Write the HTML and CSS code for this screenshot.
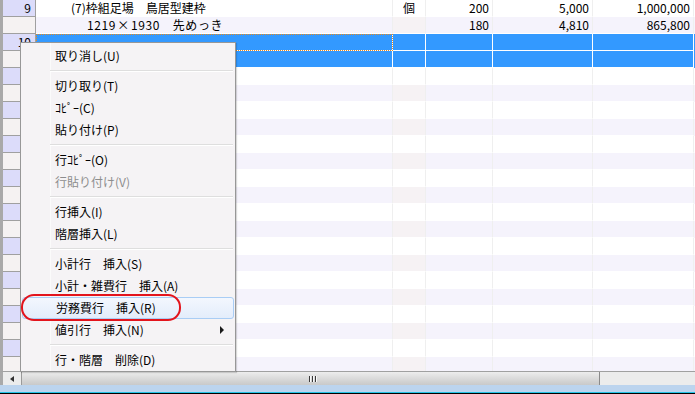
FILE: index.html
```html
<!DOCTYPE html>
<html lang="ja">

<head>
    <meta charset="UTF-8">
    <title>明細入力</title>
    <link rel="stylesheet" href="styles.css">
</head>

<body>
    <div class="window">
        <div class="grid">
            <div class="row">
                <div class="hdr">9</div>
                <div class="cell name">(7)枠組足場　鳥居型建枠</div>
                <div class="cell unit">個</div>
                <div class="cell num n1">200</div>
                <div class="cell num n2">5,000</div>
                <div class="cell num n3">1,000,000</div>
            </div>
            <div class="row alt">
                <div class="hdr">&nbsp;</div>
                <div class="cell name sub">1219<span class="times">×</span>1930　先めっき</div>
                <div class="cell unit"></div>
                <div class="cell num n1">180</div>
                <div class="cell num n2">4,810</div>
                <div class="cell num n3">865,800</div>
            </div>
            <div class="row sel">
                <div class="hdr">10</div>
                <div class="cell name focus"></div>
                <div class="cell unit"></div>
                <div class="cell num n1"></div>
                <div class="cell num n2"></div>
                <div class="cell num n3"></div>
            </div>
            <div class="row alt sel">
                <div class="hdr"></div>
                <div class="cell name"></div>
                <div class="cell unit"></div>
                <div class="cell num n1"></div>
                <div class="cell num n2"></div>
                <div class="cell num n3"></div>
            </div>
            <!-- empty rows -->
            <div class="row"><div class="hdr"></div><div class="cell name"></div><div class="cell unit"></div><div class="cell num n1"></div><div class="cell num n2"></div><div class="cell num n3"></div></div>
            <div class="row alt"><div class="hdr"></div><div class="cell name"></div><div class="cell unit"></div><div class="cell num n1"></div><div class="cell num n2"></div><div class="cell num n3"></div></div>
            <div class="row"><div class="hdr"></div><div class="cell name"></div><div class="cell unit"></div><div class="cell num n1"></div><div class="cell num n2"></div><div class="cell num n3"></div></div>
            <div class="row alt"><div class="hdr"></div><div class="cell name"></div><div class="cell unit"></div><div class="cell num n1"></div><div class="cell num n2"></div><div class="cell num n3"></div></div>
            <div class="row"><div class="hdr"></div><div class="cell name"></div><div class="cell unit"></div><div class="cell num n1"></div><div class="cell num n2"></div><div class="cell num n3"></div></div>
            <div class="row alt"><div class="hdr"></div><div class="cell name"></div><div class="cell unit"></div><div class="cell num n1"></div><div class="cell num n2"></div><div class="cell num n3"></div></div>
            <div class="row"><div class="hdr"></div><div class="cell name"></div><div class="cell unit"></div><div class="cell num n1"></div><div class="cell num n2"></div><div class="cell num n3"></div></div>
            <div class="row alt"><div class="hdr"></div><div class="cell name"></div><div class="cell unit"></div><div class="cell num n1"></div><div class="cell num n2"></div><div class="cell num n3"></div></div>
            <div class="row"><div class="hdr"></div><div class="cell name"></div><div class="cell unit"></div><div class="cell num n1"></div><div class="cell num n2"></div><div class="cell num n3"></div></div>
            <div class="row alt"><div class="hdr"></div><div class="cell name"></div><div class="cell unit"></div><div class="cell num n1"></div><div class="cell num n2"></div><div class="cell num n3"></div></div>
            <div class="row"><div class="hdr"></div><div class="cell name"></div><div class="cell unit"></div><div class="cell num n1"></div><div class="cell num n2"></div><div class="cell num n3"></div></div>
            <div class="row alt"><div class="hdr"></div><div class="cell name"></div><div class="cell unit"></div><div class="cell num n1"></div><div class="cell num n2"></div><div class="cell num n3"></div></div>
            <div class="row"><div class="hdr"></div><div class="cell name"></div><div class="cell unit"></div><div class="cell num n1"></div><div class="cell num n2"></div><div class="cell num n3"></div></div>
            <div class="row alt"><div class="hdr"></div><div class="cell name"></div><div class="cell unit"></div><div class="cell num n1"></div><div class="cell num n2"></div><div class="cell num n3"></div></div>
            <div class="row"><div class="hdr"></div><div class="cell name"></div><div class="cell unit"></div><div class="cell num n1"></div><div class="cell num n2"></div><div class="cell num n3"></div></div>
            <div class="row alt"><div class="hdr"></div><div class="cell name"></div><div class="cell unit"></div><div class="cell num n1"></div><div class="cell num n2"></div><div class="cell num n3"></div></div>
            <div class="row"><div class="hdr"></div><div class="cell name"></div><div class="cell unit"></div><div class="cell num n1"></div><div class="cell num n2"></div><div class="cell num n3"></div></div>
            <div class="row alt"><div class="hdr"></div><div class="cell name"></div><div class="cell unit"></div><div class="cell num n1"></div><div class="cell num n2"></div><div class="cell num n3"></div></div>
        </div>

        <!-- horizontal scroll bar -->
        <div class="hscroll">
            <div class="sb-btn"><span class="arrow-left"></span></div>
            <div class="sb-thumb">
                <span class="grip"><i></i><i></i><i></i></span>
            </div>
            <div class="sb-track"></div>
        </div>
        <div class="taskbar"></div>

        <!-- context menu -->
        <div class="ctxmenu">
            <div class="item">取り消し(U)</div>
            <div class="sep"></div>
            <div class="item">切り取り(T)</div>
            <div class="item">ｺﾋﾟｰ(C)</div>
            <div class="item">貼り付け(P)</div>
            <div class="sep"></div>
            <div class="item">行ｺﾋﾟｰ(O)</div>
            <div class="item disabled">行貼り付け(V)</div>
            <div class="sep"></div>
            <div class="item">行挿入(I)</div>
            <div class="item">階層挿入(L)</div>
            <div class="sep"></div>
            <div class="item">小計行　挿入(S)</div>
            <div class="item">小計・雑費行　挿入(A)</div>
            <div class="item hover">労務費行　挿入(R)</div>
            <div class="item has-sub">値引行　挿入(N)<span class="sub-arrow"></span></div>
            <div class="sep"></div>
            <div class="item">行・階層　削除(D)</div>
        </div>

        <!-- red mark -->
        <div class="mark"></div>
    </div>
</body>

</html>
```

FILE: styles.css
```css
* {
    box-sizing: border-box;
}

body {
    margin: 0;
    font-family: "Noto Sans CJK JP", sans-serif;
    font-size: 12px;
    color: #000;
    background: #fff;
}

.window {
    position: relative;
    width: 695px;
    height: 394px;
    overflow: hidden;
    background: #fff;
}

/* grid */
.grid {
    height: 371px;
    overflow: hidden;
    border-left: 3px solid #a9a9a9;
}

.row {
    display: flex;
    height: 17px;
    line-height: 16px;
    background: #fff;
}

.row.alt {
    background: #f5f3fc;
}

.row.sel {
    background: #3399ff;
}

.hdr {
    width: 33px;
    height: 17px;
    padding-right: 4px;
    text-align: right;
    background: #dcdcfa;
    border-right: 1px solid #a0a0a0;
    border-bottom: 1px solid #a0a0a0;
}

.row.alt .hdr {
    background: #f5f2f2;
}

.cell {
    height: 17px;
    white-space: nowrap;
    overflow: hidden;
    border-right: 1px solid #efefef;
    border-bottom: 1px solid #fff;
}

.row.sel .cell {
    border-right-color: #fff;
}

.name {
    width: 357px;
    padding-left: 35px;
}

.name.sub {
    padding-left: 51px;
    letter-spacing: 0.6px;
}

.times {
    display: inline-block;
    width: 15px;
    text-align: center;
}

.name.focus {
    outline: 1px dotted #e8891c;
    outline-offset: -1px;
}

.unit {
    width: 33px;
    text-align: center;
}

.row.alt .unit {
    background: #f6f2f4;
}

.row.sel .unit {
    background: transparent;
}

.num {
    text-align: right;
    padding-right: 3px;
}

.n1 {
    width: 67px;
}

.n2 {
    width: 100px;
}

.n3 {
    width: 101px;
}

/* scroll bar */
.hscroll {
    display: flex;
    height: 14px;
    border-left: 3px solid #a9a9a9;
    border-top: 1px solid #a0a0a0;
    background: #ececec;
}

.sb-btn {
    width: 18px;
    display: flex;
    align-items: center;
    justify-content: center;
}

.arrow-left {
    width: 0;
    height: 0;
    border-top: 3px solid transparent;
    border-bottom: 3px solid transparent;
    border-right: 4px solid #303030;
}

.sb-thumb {
    width: 579px;
    display: flex;
    align-items: center;
    justify-content: center;
    border-left: 1px solid #9a9a9a;
    border-right: 1px solid #8a8a8a;
    background: linear-gradient(#ededed, #dcdcdc 45%, #c9c9c9);
}

.grip {
    display: flex;
    gap: 2px;
    margin-left: 4px;
}

.grip i {
    width: 1px;
    height: 6px;
    background: #3a3a3a;
    box-shadow: 1px 0 0 #fafafa;
}

.sb-track {
    flex: 1;
    background: #ececec;
}

.taskbar {
    height: 9px;
    background: #bcd4ee;
    border-bottom: 1px solid #000;
    box-shadow: inset 0 -1px 0 #25c3e6;
}

/* context menu */
.ctxmenu {
    position: absolute;
    left: 20px;
    top: 42px;
    width: 216px;
    height: 330px;
    padding-top: 2px;
    background: #f5f3f5;
    border: 1px solid #979797;
    box-shadow: 1px 1px 1px rgba(0, 0, 0, 0.15);
}

.ctxmenu::before {
    content: "";
    position: absolute;
    left: 29px;
    top: 0;
    bottom: 0;
    width: 1px;
    background: #fbfbfb;
}

.item {
    position: relative;
    height: 22px;
    line-height: 22px;
    padding-left: 34px;
    white-space: nowrap;
}

.item.disabled {
    color: #8d8d8d;
}

.item.hover {
    margin: 0 1px;
    padding-left: 33px;
    line-height: 20px;
    border: 1px solid #a9cdf5;
    border-radius: 3px;
    background: linear-gradient(#f3f7fe, #e3edfb);
}

.sub-arrow {
    position: absolute;
    right: 11px;
    top: 7px;
    width: 0;
    height: 0;
    border-top: 4px solid transparent;
    border-bottom: 4px solid transparent;
    border-left: 4px solid #1a1a1a;
}

.sep {
    position: relative;
    height: 8px;
}

.sep::after {
    content: "";
    position: absolute;
    left: 29px;
    right: 2px;
    top: 3px;
    height: 1px;
    background: #dedede;
    box-shadow: 0 1px 0 #fff;
}

.mark {
    position: absolute;
    left: 21px;
    top: 294px;
    width: 160px;
    height: 27px;
    border: 2px solid #e3141c;
    border-radius: 13px;
}
```
